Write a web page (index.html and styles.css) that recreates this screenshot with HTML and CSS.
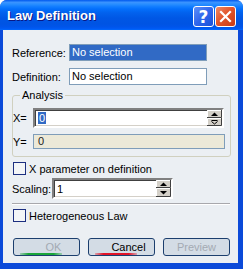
FILE: index.html
```html
<!DOCTYPE html>
<html lang="en">
<head>
  <meta charset="UTF-8" />
  <title>Law Definition</title>
  <link rel="stylesheet" href="styles.css">
</head>
<body>

<div class="window">
  <div class="titlebar">
    <span class="title">Law Definition</span>
    <span class="tb-btn help">?</span>
    <span class="tb-btn close">
      <svg width="19" height="19" viewBox="0 0 19 19">
        <path d="M5 5 L14 14 M14 5 L5 14" stroke="#fff" stroke-width="2.2" stroke-linecap="square" />
      </svg>
    </span>
  </div>

  <div class="client">
    <div class="row ref-row">
      <span class="lbl lbl-wide">Reference:</span>
      <div class="field selected">No selection</div>
    </div>
    <div class="row def-row">
      <span class="lbl lbl-wide">Definition:</span>
      <div class="field">No selection</div>
    </div>

    <fieldset class="group">
      <legend>Analysis</legend>
      <div class="row">
        <span class="lbl lbl-xy">X=</span>
        <div class="spin-field x-field">
          <span class="value"><span class="sel">0</span></span>
          <svg class="spinner" width="15" height="16" viewBox="0 0 15 16">
            <rect x="0" y="0" width="15" height="8" fill="#d4d0c8" />
            <path d="M0 7.5 H14.5 V0" stroke="#404040" fill="none" />
            <path d="M0.5 7 V0.5 H14" stroke="#fff" fill="none" />
            <path d="M4 6 L11 6 L7.5 2.5 Z" fill="#000" />
            <rect x="0" y="8" width="15" height="8" fill="#d4d0c8" />
            <path d="M0 15.5 H14.5 V8" stroke="#404040" fill="none" />
            <path d="M0.5 15 V8.5 H14" stroke="#fff" fill="none" />
            <path d="M4.5 10.5 H10.5 M4.5 11.5 L7.5 14 L10.5 11.5" stroke="#000" fill="none" />
          </svg>
        </div>
      </div>
      <div class="row y-row">
        <span class="lbl lbl-xy">Y=</span>
        <div class="field readonly">0</div>
      </div>
    </fieldset>

    <div class="check-row param-row">
      <span class="checkbox"></span>
      <span>X parameter on definition</span>
    </div>

    <div class="row scaling-row">
      <span class="lbl lbl-scale">Scaling:</span>
      <div class="spin-field scale-field">
        <span class="value">1</span>
        <svg class="spinner" width="15" height="17" viewBox="0 0 15 17">
          <rect x="0" y="0" width="15" height="8" fill="#d4d0c8" />
          <path d="M0 7.5 H14.5 V0" stroke="#404040" fill="none" />
          <path d="M0.5 7 V0.5 H14" stroke="#fff" fill="none" />
          <path d="M4 6 L11 6 L7.5 2.5 Z" fill="#000" />
          <rect x="0" y="8" width="15" height="9" fill="#d4d0c8" />
          <path d="M0 16.5 H14.5 V8" stroke="#404040" fill="none" />
          <path d="M0.5 16 V8.5 H14" stroke="#fff" fill="none" />
          <path d="M4 11 L11 11 L7.5 14.5 Z" fill="#000" />
        </svg>
      </div>
    </div>

    <hr class="sep">

    <div class="check-row hetero-row">
      <span class="checkbox"></span>
      <span>Heterogeneous Law</span>
    </div>

    <div class="buttons">
      <button class="btn btn-ok" disabled>OK</button>
      <button class="btn btn-cancel">Cancel</button>
      <button class="btn btn-preview" disabled>Preview</button>
    </div>
  </div>
</div>

</body>
</html>
```

FILE: styles.css
```css
* {
  margin: 0;
  padding: 0;
  box-sizing: border-box;
}

body {
  background-color: #fff;
  font-family: 'Liberation Sans', Arial, sans-serif;
  font-size: 11px;
  color: #000;
}

.window {
  width: 243px;
  height: 269px;
  display: flex;
  flex-direction: column;
  background-color: #0b4ad9;
  border-radius: 7px 7px 0 0;
  overflow: hidden;
}

/* title bar */

.titlebar {
  height: 30px;
  flex: none;
  display: flex;
  align-items: center;
  padding: 0 7px 0 7px;
  background: linear-gradient(to bottom, #0058ee 0%, #3a93ff 8%, #288eff 14%, #127dff 22%, #036ffc 30%, #0262ee 42%, #0057e5 60%, #0054e3 80%, #0055eb 90%, #005bf5 96%, #026afe 100%);
}

.title {
  flex: 1;
  color: #fff;
  font-weight: bold;
  font-size: 13px;
  text-shadow: 1px 1px #0a1883;
  margin-top: 1px;
}

.tb-btn {
  width: 21px;
  height: 21px;
  margin-left: 1px;
  margin-top: 3px;
  border: 1px solid #fff;
  border-radius: 3px;
  display: flex;
  align-items: center;
  justify-content: center;
  color: #fff;
}

.help {
  background: linear-gradient(135deg, #5d8ff8 0%, #3066ec 50%, #1b4fd8 100%);
  font-family: 'DejaVu Sans', sans-serif;
  font-weight: bold;
  font-size: 17px;
}

.close {
  background: linear-gradient(135deg, #ee8a66 0%, #e2552c 45%, #c83b17 100%);
}

/* client area */

.client {
  flex: 1;
  margin: 0 5px 6px 3px;
  padding: 14px 8px 0 9px;
  background-color: #ebeff3;
}

.row {
  display: flex;
  align-items: center;
}

.def-row {
  margin-top: 7px;
}

.lbl-wide {
  width: 57px;
}

.lbl-xy {
  width: 20px;
}

.lbl-scale {
  width: 40px;
}

.field {
  width: 138px;
  height: 17px;
  line-height: 15px;
  padding-left: 2px;
  border: 1px solid #7f9db9;
  background-color: #fff;
}

.field.selected {
  background-color: #316ac5;
  color: #fff;
}

.field.readonly {
  width: 192px;
  height: 15px;
  line-height: 13px;
  padding-left: 4px;
  background-color: #ece9d8;
  color: #222;
}

/* analysis group */

.group {
  margin-top: 4px;
  padding: 6px 5px 7px 0;
  border: 1px solid #d0d0bf;
  border-radius: 3px;
}

.group legend {
  margin-left: 7px;
  padding: 0 2px;
  line-height: 13px;
  font-size: 11px;
}

.y-row {
  margin-top: 6px;
}

.spin-field {
  display: flex;
  align-items: center;
  border: 2px solid;
  border-color: #808080 #fff #fff #808080;
  box-shadow: inset 1px 1px #404040, inset -1px -1px #d4d0c8;
  background-color: #fff;
}

.spin-field .value {
  flex: 1;
  padding-left: 3px;
}

.x-field {
  width: 191px;
  height: 20px;
}

.scale-field {
  width: 121px;
  height: 21px;
}

.spinner {
  flex: none;
  display: block;
}

.sel {
  background-color: #316ac5;
  color: #fff;
  padding: 0 1px;
  outline: 1px dotted #fff;
}

/* checkboxes */

.check-row {
  display: flex;
  align-items: center;
  margin-left: 1px;
}

.param-row {
  margin-top: 5px;
}

.hetero-row {
  margin-top: 4px;
}

.checkbox {
  width: 13px;
  height: 13px;
  margin-right: 3px;
  border: 1px solid #1c2f80;
  background-color: #f3f5f7;
}

.scaling-row {
  margin-top: 3px;
}

.sep {
  margin-top: 4px;
  border: none;
  border-top: 1px solid #a8a8ac;
  border-bottom: 1px solid #fff;
}

/* buttons */

.buttons {
  display: flex;
  gap: 8px;
  margin: 16px 0 0 1px;
}

.btn {
  width: 67px;
  height: 18px;
  border: 1px solid #1c3f6e;
  border-radius: 3px;
  font-family: 'Liberation Sans', Arial, sans-serif;
  font-size: 11px;
  background-color: #d3dce5;
  background-repeat: no-repeat;
  background-size: 42px 2px;
  background-position: 6px 14px;
  color: #000;
}

.btn:disabled {
  color: #a3aab3;
}

.btn-ok {
  padding-left: 14px;
  background-image: linear-gradient(to right, rgba(26,166,58,0.3), #1aa63a 20%, #1aa63a 80%, rgba(26,166,58,0.3));
}

.btn-cancel {
  padding-left: 14px;
  background-image: linear-gradient(to right, rgba(226,20,40,0.3), #e21428 20%, #e21428 80%, rgba(226,20,40,0.3));
}
```
